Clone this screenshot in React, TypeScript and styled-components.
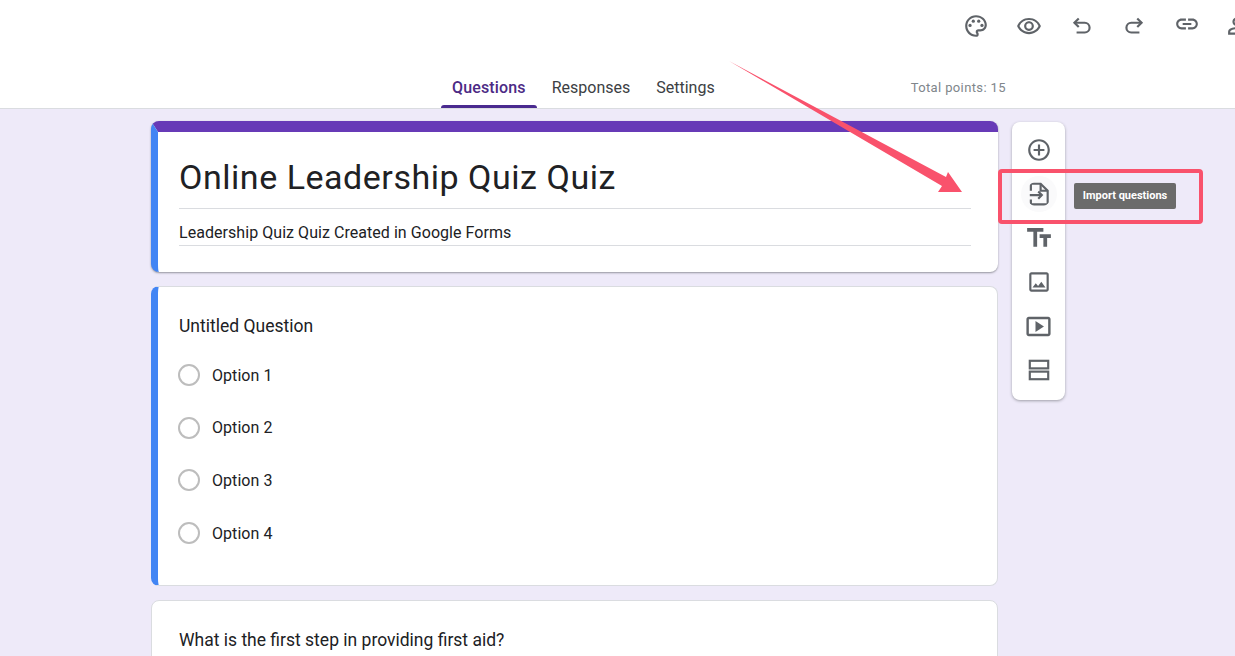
import React from 'react'
import styled, { createGlobalStyle } from 'styled-components'
import {
  MdOutlinePalette,
  MdOutlineRemoveRedEye,
  MdLink,
  MdOutlinePersonAddAlt,
  MdAddCircleOutline,
  MdTextFields,
  MdOutlineImage,
  MdOutlineSmartDisplay,
} from 'react-icons/md'

const GlobalStyle = createGlobalStyle`
  html, body {
    margin: 0;
    height: 100%;
    overflow: hidden;
    background: #eeeaf9;
  }
  body {
    font-family: Roboto, "Liberation Sans", sans-serif;
    color: #202124;
  }
`

const Page = styled.div`
  position: relative;
  width: 1235px;
  height: 656px;
  overflow: hidden;
  background: #eeeaf9;
`

const Header = styled.header`
  height: 108px;
  background: #fff;
  border-bottom: 1px solid #dadce0;
  display: flex;
  flex-direction: column;
`

const TopActions = styled.div`
  height: 52px;
  padding-left: 950px;
  display: flex;
  align-items: center;
  overflow: hidden;
`

const ActionButton = styled.span<{ $lift?: boolean }>`
  flex: 0 0 52.7px;
  display: flex;
  justify-content: center;
  color: #5f6368;
  font-size: 26px;
  margin-bottom: ${(p) => (p.$lift ? '4px' : '0')};
`

const TabRow = styled.nav`
  flex: 1;
  padding-left: 441px;
  display: flex;
  align-items: stretch;
  gap: 4px;
`

const Tab = styled.div<{ $active?: boolean }>`
  position: relative;
  padding: 26px 11px 0;
  font-size: 16px;
  font-weight: ${(p) => (p.$active ? 500 : 400)};
  letter-spacing: ${(p) => (p.$active ? '0.15px' : '0')};
  color: ${(p) => (p.$active ? '#4c2a85' : '#3c4043')};

  &::after {
    content: '';
    display: ${(p) => (p.$active ? 'block' : 'none')};
    position: absolute;
    left: 0;
    right: 0;
    bottom: 0;
    height: 3px;
    border-radius: 3px 3px 0 0;
    background: #4a2a8f;
  }
`

const TotalPoints = styled.div`
  margin-left: 181px;
  padding-top: 28px;
  font-size: 13px;
  letter-spacing: 0.37px;
  color: #80868b;
`

const Main = styled.main`
  padding: 12px 0 0 151px;
  display: flex;
  align-items: flex-start;
  gap: 14px;
`

const Cards = styled.div`
  width: 847px;
  display: flex;
  flex-direction: column;
  gap: 14px;
`

const TitleCard = styled.section`
  height: 151px;
  box-sizing: border-box;
  background: #fff;
  border-radius: 8px;
  border-top: 11px solid #673ab7;
  border-left: 7px solid #4285f4;
  box-shadow: 0 1px 2px rgba(60, 64, 67, 0.5);
  padding: 0 27px 0 21px;
`

const FormTitle = styled.h1`
  margin: 0;
  padding-top: 19px;
  height: 57px;
  font-size: 34px;
  line-height: 52px;
  font-weight: 400;
  letter-spacing: 0.53px;
  border-bottom: 1px solid #dadce0;
`

const FormDescription = styled.p`
  margin: 0;
  height: 36px;
  font-size: 16px;
  line-height: 48px;
  letter-spacing: 0.05px;
  border-bottom: 1px solid #dadce0;
`

const QuestionCard = styled.section<{ $selected?: boolean }>`
  box-sizing: border-box;
  height: ${(p) => (p.$selected ? '300px' : '200px')};
  background: #fff;
  border-radius: 8px;
  border: 1px solid #dadce0;
  padding: 26px 0 0 27px;
  ${(p) =>
    p.$selected &&
    `
    border-left: 7px solid #4285f4;
    padding-left: 21px;
  `}
`

const QuestionTitle = styled.div`
  font-size: 17.5px;
  line-height: 26px;
`

const Options = styled.div`
  margin-top: 10px;
  display: flex;
  flex-direction: column;
`

const OptionRow = styled.div`
  height: 52.6px;
  display: flex;
  align-items: center;
  gap: 12px;
  font-size: 16px;
  letter-spacing: 0.05px;
  color: #202124;
`

const Radio = styled.span`
  width: 22px;
  height: 22px;
  box-sizing: border-box;
  margin-left: -1px;
  border: 2px solid #bdbdbd;
  border-radius: 50%;
`

const Toolbar = styled.aside`
  width: 53px;
  height: 278px;
  margin-top: 1px;
  box-sizing: border-box;
  padding-top: 6px;
  background: #fff;
  border-radius: 8px;
  box-shadow: 0 1px 3px rgba(60, 64, 67, 0.45);
  display: flex;
  flex-direction: column;
  align-items: center;
`

const ToolButton = styled.span<{ $hover?: boolean; $size?: number }>`
  flex: 0 0 44px;
  width: 44px;
  display: flex;
  align-items: center;
  justify-content: center;
  color: #5f6368;
  font-size: ${(p) => p.$size ?? 26}px;

  & > svg {
    ${(p) =>
      p.$hover &&
      `
      box-sizing: content-box;
      padding: 5px;
      border-radius: 50%;
      background: #fafafb;
    `}
  }
`

const Tooltip = styled.div`
  position: absolute;
  left: 1074px;
  top: 183px;
  width: 102px;
  height: 26px;
  border-radius: 2px;
  background: #6b6b6b;
  color: #fff;
  font-size: 11px;
  font-weight: 700;
  line-height: 26px;
  text-align: center;
`

const Highlight = styled.div`
  position: absolute;
  left: 998px;
  top: 169px;
  width: 205px;
  height: 55px;
  box-sizing: border-box;
  border: 4px solid #f9526c;
  border-radius: 4px;
`

const ArrowOverlay = styled.svg`
  position: absolute;
  left: 0;
  top: 0;
  pointer-events: none;
`

const UndoIcon = () => (
  <svg width="26" height="26" viewBox="0 0 24 24" fill="none" stroke="currentColor" strokeWidth="2">
    <path d="M9 5L5 9l4 4" />
    <path d="M5 9h9.5a4.5 4.5 0 0 1 0 9H7" />
  </svg>
)

const RedoIcon = () => (
  <svg width="26" height="26" viewBox="0 0 24 24" fill="none" stroke="currentColor" strokeWidth="2">
    <path d="M15 5l4 4-4 4" />
    <path d="M19 9H9.5a4.5 4.5 0 0 0 0 9H17" />
  </svg>
)

const ImportIcon = () => (
  <svg width="26" height="26" viewBox="0 0 24 24" fill="none" stroke="currentColor" strokeWidth="2">
    <path d="M4.5 9V3.5a1 1 0 0 1 1-1H13.5L20 9v11.5a1 1 0 0 1-1 1H5.5a1 1 0 0 1-1-1V17" />
    <path d="M13.5 2.5V9H20" />
    <path d="M3.5 13H14.5" />
    <path d="M11.3 9.7l3.3 3.3-3.3 3.3" />
  </svg>
)

const SectionIcon = () => (
  <svg width="26" height="26" viewBox="0 0 24 24" fill="none" stroke="currentColor" strokeWidth="2">
    <rect x="3.5" y="3.5" width="17" height="7" />
    <rect x="3.5" y="13.5" width="17" height="7" />
  </svg>
)

const options = ['Option 1', 'Option 2', 'Option 3', 'Option 4']

const App: React.FC = () => {
  return (
    <Page>
      <GlobalStyle />
      <Header>
        <TopActions>
          <ActionButton><MdOutlinePalette /></ActionButton>
          <ActionButton><MdOutlineRemoveRedEye /></ActionButton>
          <ActionButton><UndoIcon /></ActionButton>
          <ActionButton><RedoIcon /></ActionButton>
          <ActionButton $lift><MdLink /></ActionButton>
          <ActionButton><MdOutlinePersonAddAlt /></ActionButton>
        </TopActions>
        <TabRow>
          <Tab $active>Questions</Tab>
          <Tab>Responses</Tab>
          <Tab>Settings</Tab>
          <TotalPoints>Total points: 15</TotalPoints>
        </TabRow>
      </Header>
      <Main>
        <Cards>
          <TitleCard>
            <FormTitle>Online Leadership Quiz Quiz</FormTitle>
            <FormDescription>Leadership Quiz Quiz Created in Google Forms</FormDescription>
          </TitleCard>
          <QuestionCard $selected>
            <QuestionTitle>Untitled Question</QuestionTitle>
            <Options>
              {options.map((o) => (
                <OptionRow key={o}>
                  <Radio />
                  {o}
                </OptionRow>
              ))}
            </Options>
          </QuestionCard>
          <QuestionCard>
            <QuestionTitle>What is the first step in providing first aid?</QuestionTitle>
          </QuestionCard>
        </Cards>
        <Toolbar>
          <ToolButton><MdAddCircleOutline /></ToolButton>
          <ToolButton $hover><ImportIcon /></ToolButton>
          <ToolButton $size={30}><MdTextFields /></ToolButton>
          <ToolButton><MdOutlineImage /></ToolButton>
          <ToolButton $size={29}><MdOutlineSmartDisplay /></ToolButton>
          <ToolButton><SectionIcon /></ToolButton>
        </Toolbar>
      </Main>
      <Tooltip>Import questions</Tooltip>
      <Highlight />
      <ArrowOverlay width="1235" height="656">
        <polygon points="729,61 946,177 948,172 962,192 938,192 942,186" fill="#f9526c" />
      </ArrowOverlay>
    </Page>
  )
}

export default App
